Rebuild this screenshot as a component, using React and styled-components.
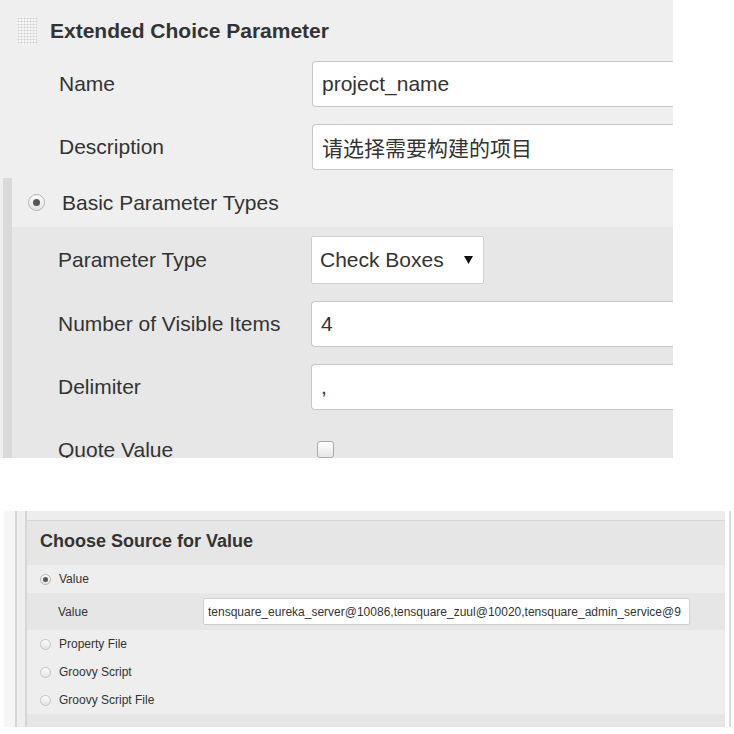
import React from "react";
import styled, { createGlobalStyle } from "styled-components";

const GlobalStyle = createGlobalStyle`
  body {
    margin: 0;
    background: #fff;
    font-family: "Liberation Sans", Arial, "Noto Sans CJK SC", sans-serif;
    color: #333;
  }
`;

const Page = styled.div`
  width: 734px;
  height: 734px;
  display: flex;
  flex-direction: column;
`;

/* ---------- top panel ---------- */

const ParamPanel = styled.section`
  width: 673px;
  height: 458px;
  overflow: hidden;
  background: #efefef;
`;

const PanelHeader = styled.div`
  display: flex;
  align-items: center;
  gap: 13px;
  height: 52px;
  box-sizing: border-box;
  padding: 17px 0 7px 17px;
`;

const Grip = styled.span`
  width: 20px;
  height: 28px;
  background-color: #f8f8f8;
  background-image: radial-gradient(circle, #cdcdcd 0.9px, transparent 1.1px);
  background-size: 3px 3px;
`;

const PanelTitle = styled.h3`
  margin: 0;
  font-size: 21px;
  font-weight: bold;
  line-height: 28px;
  color: #333;
`;

const FieldRow = styled.div`
  display: grid;
  grid-template-columns: 253px 1fr;
  align-items: center;
  height: ${(p) => p.$h || 63}px;
  padding-left: ${(p) => p.$indent}px;
`;

const FieldLabel = styled.span`
  font-size: 21px;
  color: #333;
`;

const TextBox = styled.input`
  width: 100%;
  height: 46px;
  box-sizing: border-box;
  border: 1px solid #c8c8c8;
  border-right: none;
  border-radius: 4px 0 0 4px;
  padding: 0 9px;
  background: #fff;
  font: inherit;
  font-size: 21px;
  color: #333;
  outline: none;
`;

const SelectBox = styled.div`
  display: flex;
  align-items: center;
  justify-content: space-between;
  width: 173px;
  height: 48px;
  box-sizing: border-box;
  border: 1px solid #cdcdcd;
  border-radius: 2px;
  padding: 0 10px 0 8px;
  background: #fff;
  font-size: 21px;
  color: #333;
`;

const CheckBox = styled.span`
  width: 17px;
  height: 17px;
  margin-left: 6px;
  box-sizing: border-box;
  border: 1px solid #a9a9a9;
  border-radius: 3px;
  background: linear-gradient(#ffffff, #e6e6e6);
`;

const RadioBlock = styled.div`
  margin-left: 3px;
  border-left: 9px solid #d9d9d9;
`;

const RadioRow = styled.label`
  display: flex;
  align-items: center;
  gap: ${(p) => p.$gap}px;
  height: ${(p) => p.$h}px;
  padding-left: ${(p) => p.$indent}px;
  font-size: ${(p) => p.$font}px;
  color: #333;
`;

const Radio = styled.span`
  flex: none;
  display: grid;
  place-items: center;
  width: ${(p) => p.$size}px;
  height: ${(p) => p.$size}px;
  box-sizing: border-box;
  border-radius: 50%;
  border: 1px solid ${(p) => (p.$checked ? "#b4b4b4" : "#c4c4c4")};
  background: linear-gradient(#fdfdfd, #e3e3e3);

  &::after {
    content: "";
    width: ${(p) => Math.round(p.$size * 0.42)}px;
    height: ${(p) => Math.round(p.$size * 0.42)}px;
    border-radius: 50%;
    background: ${(p) => (p.$checked ? "#575757" : "transparent")};
  }
`;

const NestedSection = styled.div`
  background: #e7e7e7;
`;

/* ---------- bottom panel ---------- */

const SourceFrame = styled.section`
  display: flex;
  width: 727px;
  height: 216px;
  margin: 53px 0 0 4px;
  box-sizing: border-box;
  border-right: 2px solid #dcdcdc;
`;

const OuterStrip = styled.span`
  width: 11px;
  background: #f6f6f6;
`;

const InnerStrip = styled.span`
  width: 8px;
  border-left: 2px solid #d6d6d6;
  background: #efefef;
`;

const SourceBody = styled.div`
  flex: 1;
  display: flex;
  flex-direction: column;
  margin-right: 4px;
  border-left: 2px solid #d6d6d6;
  background: #eeeeee;
`;

const SourceHeader = styled.div`
  display: flex;
  align-items: center;
  height: 54px;
  box-sizing: border-box;
  padding: 10px 0 4px 13px;
  background: linear-gradient(
    to bottom,
    #ededed 0 9px,
    #d9d9d9 9px 10px,
    #e6e6e6 10px
  );
  font-size: 18px;
  font-weight: bold;
  color: #333;
`;

const ValueRow = styled.div`
  display: grid;
  grid-template-columns: 145px 487px;
  align-items: center;
  height: 37px;
  padding-left: 31px;
  background: #e6e6e6;
  font-size: 12px;
`;

const SmallInput = styled.input`
  width: 100%;
  height: 27px;
  box-sizing: border-box;
  border: 1px solid #cfcfcf;
  border-radius: 2px;
  padding: 0 4px;
  background: #fff;
  font: inherit;
  font-size: 12px;
  color: #333;
  outline: none;
`;

const FooterBand = styled.div`
  height: 13px;
  background: #e6e6e6;
`;

const Arrow = () => (
  <svg width="9" height="8" viewBox="0 0 9 8">
    <polygon points="0,0 9,0 4.5,8" fill="#111" />
  </svg>
);

const sources = [
  { label: "Property File" },
  { label: "Groovy Script" },
  { label: "Groovy Script File" },
];

export default function App() {
  return (
    <Page>
      <GlobalStyle />
      <ParamPanel>
        <PanelHeader>
          <Grip />
          <PanelTitle>Extended Choice Parameter</PanelTitle>
        </PanelHeader>
        <FieldRow $indent={59}>
          <FieldLabel>Name</FieldLabel>
          <TextBox readOnly defaultValue="project_name" />
        </FieldRow>
        <FieldRow $indent={59}>
          <FieldLabel>Description</FieldLabel>
          <TextBox readOnly defaultValue="请选择需要构建的项目" />
        </FieldRow>
        <RadioBlock>
          <RadioRow $h={49} $indent={16} $gap={17} $font={21}>
            <Radio $size={17} $checked />
            Basic Parameter Types
          </RadioRow>
          <NestedSection>
            <FieldRow $indent={46} $h={65}>
              <FieldLabel>Parameter Type</FieldLabel>
              <SelectBox>
                Check Boxes
                <Arrow />
              </SelectBox>
            </FieldRow>
            <FieldRow $indent={46}>
              <FieldLabel>Number of Visible Items</FieldLabel>
              <TextBox readOnly defaultValue="4" />
            </FieldRow>
            <FieldRow $indent={46}>
              <FieldLabel>Delimiter</FieldLabel>
              <TextBox readOnly defaultValue="," />
            </FieldRow>
            <FieldRow $indent={46}>
              <FieldLabel>Quote Value</FieldLabel>
              <CheckBox />
            </FieldRow>
          </NestedSection>
        </RadioBlock>
      </ParamPanel>

      <SourceFrame>
        <OuterStrip />
        <InnerStrip />
        <SourceBody>
          <SourceHeader>Choose Source for Value</SourceHeader>
          <RadioRow $h={28} $indent={13} $gap={8} $font={12}>
            <Radio $size={11} $checked />
            Value
          </RadioRow>
          <ValueRow>
            <span>Value</span>
            <SmallInput
              readOnly
              defaultValue="tensquare_eureka_server@10086,tensquare_zuul@10020,tensquare_admin_service@9"
            />
          </ValueRow>
          {sources.map((s) => (
            <RadioRow key={s.label} $h={28} $indent={13} $gap={8} $font={12}>
              <Radio $size={11} />
              {s.label}
            </RadioRow>
          ))}
          <FooterBand />
        </SourceBody>
      </SourceFrame>
    </Page>
  );
}
